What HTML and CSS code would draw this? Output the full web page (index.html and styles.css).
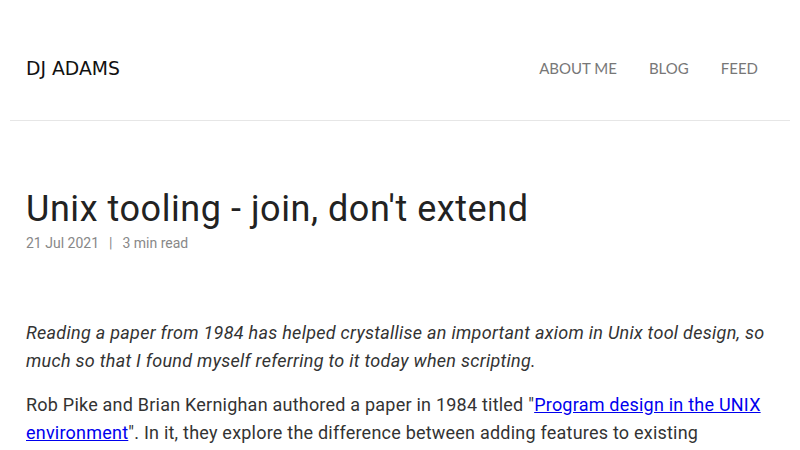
FILE: index.html
```html
<!DOCTYPE html>
<html lang="en">
<head>
<meta charset="utf-8">
<title>Unix tooling - join, don't extend</title>
<link rel="stylesheet" href="styles.css">
</head>
<body>
<div class="page">
  <header class="site-header">
    <a class="logo" href="#">DJ ADAMS</a>
    <nav class="nav">
      <a href="#">ABOUT ME</a>
      <a href="#">BLOG</a>
      <a href="#">FEED</a>
    </nav>
  </header>
  <main class="post">
    <h1 class="post-title">Unix tooling - join, don't extend</h1>
    <div class="meta"><span>21 Jul 2021</span><span class="sep">|</span><span>3 min read</span></div>
    <p class="lead">Reading a paper from 1984 has helped crystallise an important axiom in Unix tool design, so much so that I found myself referring to it today when scripting.</p>
    <p>Rob Pike and Brian Kernighan authored a paper in 1984 titled "<a href="#">Program design in the UNIX environment</a>". In it, they explore the difference between adding features to existing programs and achieving the same result by connecting programs together.</p>
  </main>
</div>
</body>
</html>
```
FILE: styles.css
```css
html, body {
  margin: 0;
  padding: 0;
  background: #fff;
}
body {
  font-family: Roboto, "Noto Sans", sans-serif;
  color: #333;
}
.page {
  padding: 0 10px;
}
.site-header {
  height: 120px;
  display: flex;
  align-items: center;
  justify-content: space-between;
  padding: 16px 32px 0 16px;
  box-sizing: border-box;
  height: 121px;
  border-bottom: 1px solid #e6e6e6;
}
.logo {
  font-family: "DejaVu Sans", sans-serif;
  font-size: 18.8px;
  color: #111;
  text-decoration: none;
}
.nav {
  display: flex;
  gap: 32px;
}
.nav a {
  font-family: Lato, "Open Sans", sans-serif;
  font-size: 15px;
  color: #777;
  text-decoration: none;
}
.post {
  padding: 0 16px;
}
.post-title {
  font-family: Roboto, sans-serif;
  font-weight: 400;
  font-size: 36px;
  letter-spacing: 0.55px;
  line-height: 44px;
  color: #222;
  margin: 66px 0 0;
}
.meta {
  font-size: 14px;
  color: #888;
  line-height: 20px;
  margin-top: 2px;
}
.sep {
  margin: 0 10px;
}
.post p {
  font-size: 18px;
  line-height: 28px;
  letter-spacing: 0.22px;
}
.post p.lead {
  font-style: italic;
  letter-spacing: 0.28px;
  margin: 66px 0 0;
}
.post p + p {
  margin-top: 16px;
}
.post a {
  color: #0000ee;
}
```
